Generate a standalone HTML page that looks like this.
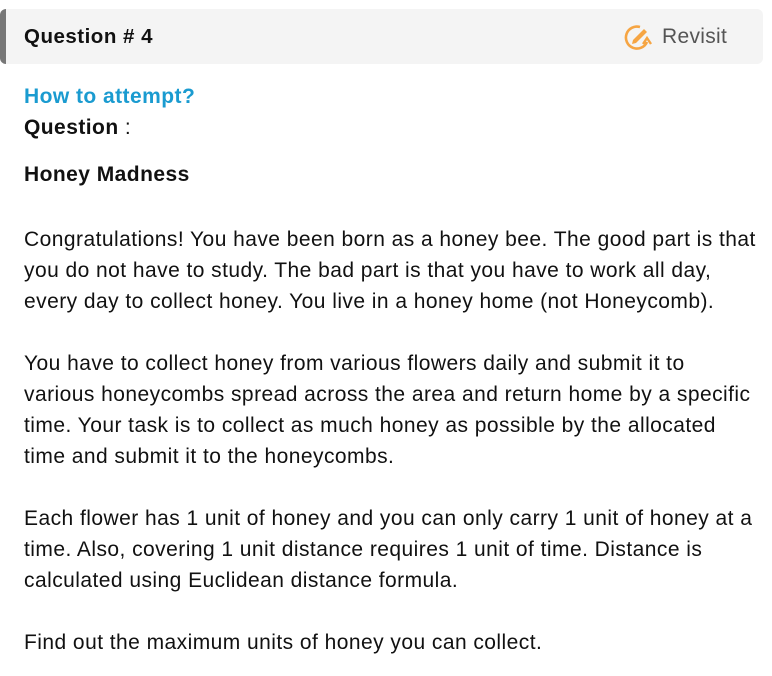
<!DOCTYPE html>
<html><head><style>
body{margin:0;width:772px;height:676px;background:#fff;font-family:"Liberation Sans",Arial,sans-serif;color:#111;overflow:hidden}
.hd{position:absolute;left:0;top:9px;width:763px;height:55px;background:#f4f4f4;border-radius:6px;border-left:6px solid #777;box-sizing:border-box}
.hd .t{position:absolute;left:18px;top:16px;font-size:20.5px;font-weight:bold;letter-spacing:0.5px}
.hd .r{position:absolute;left:656px;top:16px;font-size:21px;color:#555;letter-spacing:0.3px}
.hd svg{position:absolute;left:614px;top:11px}
.c{position:absolute;left:24px;width:748px;font-size:21px;letter-spacing:0.45px;line-height:31px;white-space:nowrap}
.h{font-size:21px;letter-spacing:0.45px}
</style></head><body>
<div class="hd"><span class="t">Question # 4</span>
<svg width="34" height="34" viewBox="0 0 34 34"><path d="M20 7 A11 11 0 1 0 27 22" fill="none" stroke="#f6a543" stroke-width="2.6"/><path d="M23 24 L27 18 L31 24" fill="none" stroke="#f6a543" stroke-width="2.4"/><path d="M13 20 L24 9 L27 12 L16 23 L12 24 Z" fill="#f6a543"/></svg>
<span class="r">Revisit</span></div>
<div class="c" style="top:81px;color:#1a9bd0;font-weight:bold">How to attempt?</div>
<div class="c" style="top:112px"><b>Question</b> :</div>
<div class="c" style="top:159px;font-weight:bold">Honey Madness</div>
<div class="c" style="top:224px">Congratulations! You have been born as a honey bee. The good part is that<br>you do not have to study. The bad part is that you have to work all day,<br>every day to collect honey. You live in a honey home (not Honeycomb).<br><br>You have to collect honey from various flowers daily and submit it to<br>various honeycombs spread across the area and return home by a specific<br>time. Your task is to collect as much honey as possible by the allocated<br>time and submit it to the honeycombs.<br><br>Each flower has 1 unit of honey and you can only carry 1 unit of honey at a<br>time. Also, covering 1 unit distance requires 1 unit of time. Distance is<br>calculated using Euclidean distance formula.<br><br>Find out the maximum units of honey you can collect.</div>
</body></html>
